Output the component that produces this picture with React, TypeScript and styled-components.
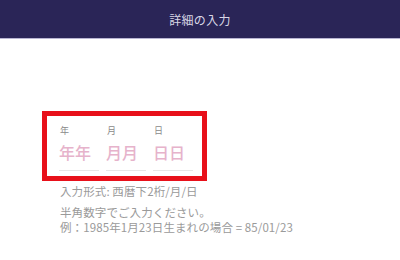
import React from "react";
import styled, { createGlobalStyle } from "styled-components";

const Global = createGlobalStyle`
  html, body { margin: 0; padding: 0; background: #ffffff; }
  body { font-family: "Noto Sans CJK JP", "Noto Sans", sans-serif; width: 400px; height: 260px; overflow: hidden; }
`;

const Header = styled.header`
  height: 38px;
  background: #2a2557;
  border-bottom: 1px solid #b8b5d2;
  display: flex;
  align-items: center;
  justify-content: center;
  color: #d9d7e6;
  font-size: 12px;
  letter-spacing: 0.3px;
`;

const Main = styled.main`
  padding: 72px 0 0 42px;
`;

const Frame = styled.div`
  width: 165px;
  height: 70px;
  box-sizing: border-box;
  border: 5px solid #e8101a;
  padding: 9px 0 0 12px;
  display: flex;
  gap: 7px;
`;

const Field = styled.div`
  width: 40px;
  display: flex;
  flex-direction: column;
`;

const Label = styled.div`
  font-size: 9px;
  line-height: 12px;
  color: #8a8a8a;
  padding-left: 1px;
`;

const Placeholder = styled.div`
  font-size: 16px;
  line-height: 20px;
  margin-top: 5px;
  color: #e6b3cb;
  font-weight: 500;
  white-space: nowrap;
`;

const Underline = styled.div`
  margin-top: 8px;
  height: 1px;
  background: #e6e6e6;
`;

const Note = styled.p<{ $top: number }>`
  margin: ${(p) => p.$top}px 0 0 18px;
  font-size: 11.5px;
  line-height: 15px;
  letter-spacing: 0.1px;
  color: #9a9a9a;
  white-space: nowrap;
`;

const fields = [
  { label: "年", ph: "年年" },
  { label: "月", ph: "月月" },
  { label: "日", ph: "日日" },
];

export default function App() {
  return (
    <>
      <Global />
      <Header>詳細の入力</Header>
      <Main>
        <Frame>
          {fields.map((f) => (
            <Field key={f.label}>
              <Label>{f.label}</Label>
              <Placeholder>{f.ph}</Placeholder>
              <Underline />
            </Field>
          ))}
        </Frame>
        <Note $top={3}>入力形式: 西暦下2桁/月/日</Note>
        <Note $top={6}>
          半角数字でご入力ください。
          <br />
          例：1985年1月23日生まれの場合 = 85/01/23
        </Note>
      </Main>
    </>
  );
}
